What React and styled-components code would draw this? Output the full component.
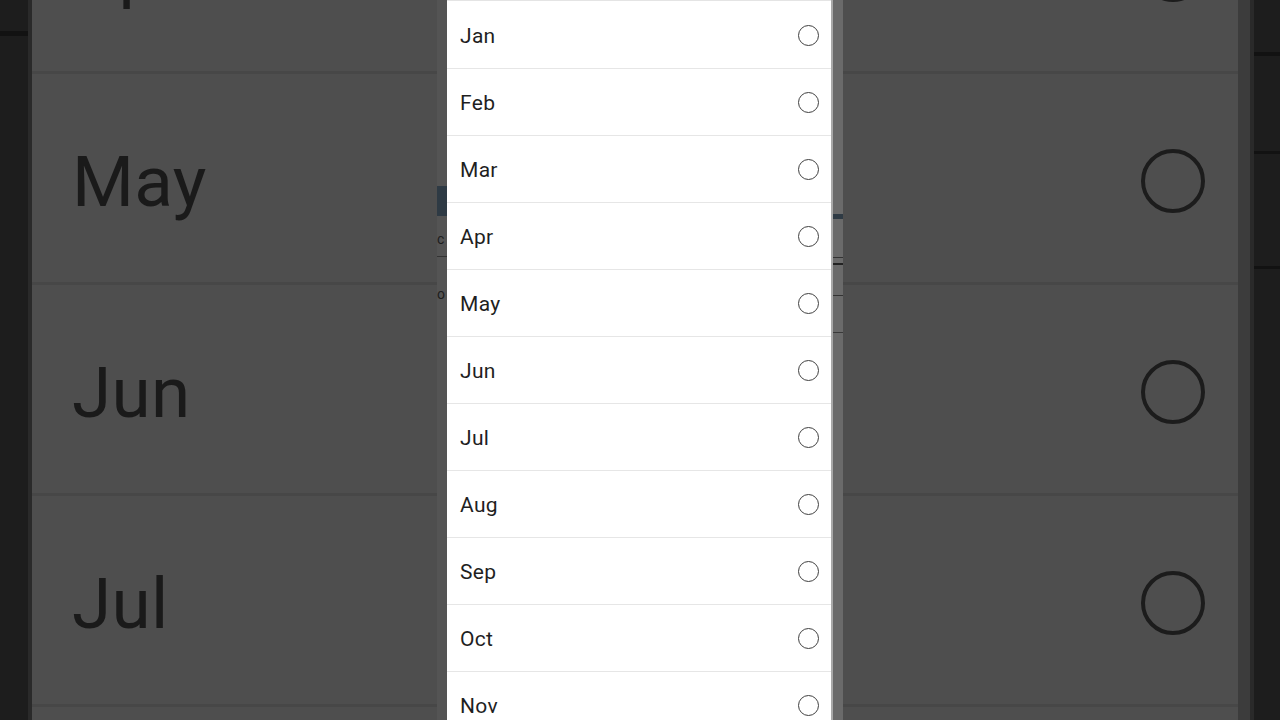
import styled, { createGlobalStyle } from "styled-components";

const GlobalStyle = createGlobalStyle`
	html, body {
		margin: 0;
		padding: 0;
		background: #1d1d1d;
		overflow: hidden;
	}
	* {
		box-sizing: border-box;
	}
`;

const months = ["Jan", "Feb", "Mar", "Apr", "May", "Jun", "Jul", "Aug", "Sep", "Oct", "Nov", "Dec"];
const bigMonths = ["Apr", "May", "Jun", "Jul", "Aug"];

const Stage = styled.div`
	position: relative;
	width: 1280px;
	height: 720px;
	display: flex;
	overflow: hidden;
	font-family: Roboto, "Noto Sans", sans-serif;
	background: #1d1d1d;
`;

const SideBar = styled.div`
	width: ${(props) => props.$width}px;
	flex: none;
	display: flex;
	flex-direction: column;
	background: #1d1d1d;
	border-${(props) => props.$edge}: 4px solid #2a2a2a;
`;

const SideLine = styled.div`
	height: ${(props) => props.$h}px;
	margin-top: ${(props) => props.$top}px;
	background: ${(props) => props.$color};
`;

const Backdrop = styled.div`
	width: 1206px;
	flex: none;
	overflow: hidden;
	background: #4e4e4e;
`;

const EdgeShade = styled.div`
	width: 12px;
	flex: none;
	background: #3c3c3c;
`;

const BigList = styled.div`
	margin-top: -137px;
	display: flex;
	flex-direction: column;
`;

const BigRow = styled.div`
	height: 211px;
	flex: none;
	display: flex;
	align-items: center;
	justify-content: space-between;
	padding: 6px 33px 0 40px;
	border-bottom: 3px solid #474747;
`;

const BigLabel = styled.span`
	font-size: 71px;
	color: #1a1a1a;
	letter-spacing: 0.3px;
	filter: blur(0.6px);
`;

const BigRadio = styled.span`
	width: 64px;
	height: 64px;
	border-radius: 50%;
	border: 4px solid #1c1c1c;
	filter: blur(0.5px);
`;

const Phone = styled.div`
	position: absolute;
	top: 0;
	left: 437px;
	width: 406px;
	height: 720px;
	display: flex;
`;

const DimStrip = styled.div`
	width: ${(props) => props.$width}px;
	flex: none;
	background: ${(props) => props.$bg};
	border-left: ${(props) => (props.$lit ? "2px solid #a8a8a8" : "none")};
	display: flex;
	flex-direction: column;
	font-size: 14px;
	color: #1d1d1d;
	overflow: hidden;
`;

const DimBlock = styled.div`
	height: ${(props) => props.$h}px;
	margin-top: ${(props) => props.$top}px;
	background: ${(props) => props.$color};
`;

const DimText = styled.span`
	margin-top: ${(props) => props.$top}px;
	line-height: 1;
	white-space: nowrap;
`;

const Sheet = styled.div`
	width: 384px;
	flex: none;
	background: #ffffff;
	display: flex;
	flex-direction: column;
	padding-top: 1px;
	border-top: 1px solid #e4e4e4;
`;

const Row = styled.div`
	height: 67px;
	flex: none;
	display: flex;
	align-items: center;
	justify-content: space-between;
	padding: 1px 12px 0 13px;
	border-bottom: 1px solid #e6e6e6;
`;

const Label = styled.span`
	font-size: 21px;
	color: #1f1f1f;
	letter-spacing: 0.3px;
`;

const Radio = styled.span`
	width: 21px;
	height: 21px;
	border-radius: 50%;
	border: 1.7px solid #404040;
`;

export default function App() {
	return (
		<>
			<GlobalStyle />
			<Stage>
				<SideBar $width={32} $edge="right">
					<SideLine $h={5} $top={31} $color="#121212" />
				</SideBar>
				<Backdrop>
					<BigList>
						{bigMonths.map((m) => (
							<BigRow key={m}>
								<BigLabel>{m}</BigLabel>
								<BigRadio />
							</BigRow>
						))}
					</BigList>
				</Backdrop>
				<EdgeShade />
				<SideBar $width={30} $edge="left">
					<SideLine $h={4} $top={52} $color="#121212" />
					<SideLine $h={3} $top={95} $color="#121212" />
					<SideLine $h={3} $top={112} $color="#121212" />
				</SideBar>

				<Phone>
					<DimStrip $width={10} $bg="#545454">
						<DimBlock $h={30} $top={186} $color="#2e3a44" />
						<DimText $top={16}>c</DimText>
						<DimBlock $h={1} $top={10} $color="#333" />
						<DimText $top={30}>o</DimText>
					</DimStrip>
					<Sheet>
						{months.slice(0, 11).map((m) => (
							<Row key={m}>
								<Label>{m}</Label>
								<Radio />
							</Row>
						))}
					</Sheet>
					<DimStrip $width={12} $bg="#6a6a6a" $lit>
						<DimBlock $h={5} $top={214} $color="#2e3a44" />
						<DimBlock $h={1} $top={38} $color="#333" />
						<DimBlock $h={2} $top={5} $color="#222" />
						<DimBlock $h={1} $top={30} $color="#333" />
						<DimBlock $h={1} $top={36} $color="#3a3a3a" />
					</DimStrip>
				</Phone>
			</Stage>
		</>
	);
}
